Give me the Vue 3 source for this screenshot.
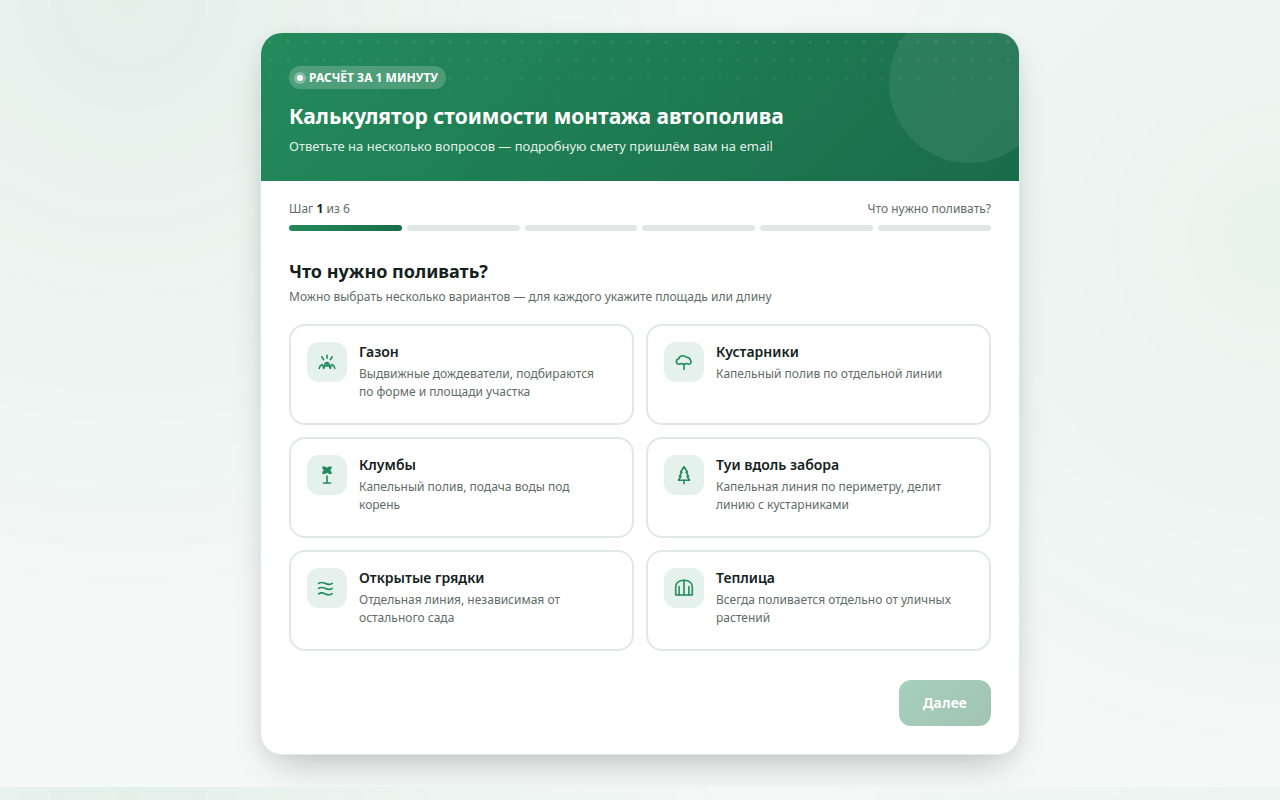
<script setup>
import { ref } from 'vue'

const total = 6
const step = ref(1)
const selected = ref([])

const options = [
  { id: 'lawn', title: 'Газон', text: 'Выдвижные дождеватели, подбираются по форме и площади участка' },
  { id: 'shrubs', title: 'Кустарники', text: 'Капельный полив по отдельной линии' },
  { id: 'flowers', title: 'Клумбы', text: 'Капельный полив, подача воды под корень' },
  { id: 'thuja', title: 'Туи вдоль забора', text: 'Капельная линия по периметру, делит линию с кустарниками' },
  { id: 'beds', title: 'Открытые грядки', text: 'Отдельная линия, независимая от остального сада' },
  { id: 'greenhouse', title: 'Теплица', text: 'Всегда поливается отдельно от уличных растений' }
]

function toggle(id) {
  selected.value = selected.value.includes(id)
    ? selected.value.filter((item) => item !== id)
    : [...selected.value, id]
}
</script>

<template>
  <div class="page">
    <main class="card">
      <header class="hero">
        <span class="chip"><span class="dot"></span>РАСЧЁТ ЗА 1 МИНУТУ</span>
        <h1>Калькулятор стоимости монтажа автополива</h1>
        <p>Ответьте на несколько вопросов — подробную смету пришлём вам на email</p>
      </header>

      <section class="progress">
        <div class="progress-row">
          <span>Шаг <b>{{ step }}</b> из {{ total }}</span>
          <span>Что нужно поливать?</span>
        </div>
        <div class="bars">
          <span v-for="n in total" :key="n" class="bar" :class="{ done: n <= step }"></span>
        </div>
      </section>

      <section class="content">
        <h2>Что нужно поливать?</h2>
        <p class="hint">Можно выбрать несколько вариантов — для каждого укажите площадь или длину</p>

        <div class="grid">
          <button
            v-for="option in options"
            :key="option.id"
            type="button"
            class="option"
            :class="{ active: selected.includes(option.id) }"
            :aria-pressed="selected.includes(option.id)"
            @click="toggle(option.id)"
          >
            <span class="icon">
              <svg viewBox="0 0 20 20" aria-hidden="true">
                <g v-if="option.id === 'lawn'">
                  <path d="M2.2 16.4c.3-2 1.2-3.2 3-3.9 1 .8 1.3 2.2 1.4 3.9M17.8 16.4c-.3-2-1.2-3.2-3-3.9-1 .8-1.3 2.2-1.4 3.9" />
                  <path d="M7.2 15.8c.2-2.8.8-5.2 2.8-5.2s2.6 2.4 2.8 5.2M8.2 14h3.6M10 11v3" />
                  <path d="M10 3.2v3M4.8 4.8l1.8 2.8M15.2 4.8l-1.8 2.8" />
                </g>
                <g v-else-if="option.id === 'shrubs'">
                  <path d="M5.8 12.2c-2 0-3.4-1-3.4-2.7 0-1.5 1-2.4 2.3-2.7.5-2 2.2-3.1 4.2-3.1 1.5 0 2.7.6 3.5 1.6 2.2 0 3.6 1.1 3.9 2.8 1.7 1.9.7 4.1-1.8 4.1-.8-.8-1.8-.9-2.8-.5-1 .5-2.8.5-3.7 0-.8-.4-1.6-.1-2.2.5Z" />
                  <path d="M10 12.4v5" />
                </g>
                <g v-else-if="option.id === 'flowers'">
                  <path class="fill" d="M5.2 1.8c2-.5 3.8.1 4.8 1 1-.9 2.8-1.5 4.8-1 .1 1.5-.6 2.7-1.6 3.4 1 .9 1.7 2.1 1.6 3.9-2 .3-3.6-.2-4.8-1.3-1.2 1.1-2.8 1.6-4.8 1.3-.1-1.8.6-3 1.6-3.9-1-.7-1.7-1.9-1.6-3.4Z" />
                  <path d="M10 11v7M6.5 18h7" />
                </g>
                <g v-else-if="option.id === 'thuja'">
                  <path d="M10 1.8 6.5 7.2H8L5.5 11.2H7L4.4 15.2h11.2L13 11.2h1.5L12 7.2h1.5Z" />
                  <path d="M10 15.2v3.4" />
                </g>
                <g v-else-if="option.id === 'beds'">
                  <path d="M1.6 5.4c3-2 4.8-.8 7 .2 2.3 1.1 4.3 1.2 6.6-.3M1.6 10.4c3-2 4.8-.8 7 .2 2.3 1.1 4.3 1.2 6.6-.3M1.6 15.8c3-2 4.8-.8 7 .2 2.3 1.1 4.3 1.2 6.6-.3" />
                </g>
                <g v-else>
                  <path d="M1.7 17V9c0-4 3-6.8 8.3-6.8S18.3 5 18.3 9v8Z" />
                  <path d="M5.1 17V8.5M10 17V2.2M14.9 17V8.5" />
                </g>
              </svg>
            </span>
            <span class="copy">
              <span class="title">{{ option.title }}</span>
              <span class="text">{{ option.text }}</span>
            </span>
          </button>
        </div>

        <footer class="actions">
          <button type="button" class="next" :disabled="!selected.length">Далее</button>
        </footer>
      </section>
    </main>
  </div>
</template>

<style>
body {
  background:
    radial-gradient(circle at 10% 0%, rgba(34, 148, 91, 0.08), transparent 45%),
    radial-gradient(circle at 100% 30%, rgba(34, 160, 91, 0.06), transparent 40%),
    #f4f8f7;
}
</style>

<style scoped>
.page {
  padding: 32px 16px;
  font-family: "Noto Sans", "Open Sans", sans-serif;
  color: #14211c;
}

.card {
  max-width: 758px;
  margin: 0 auto;
  overflow: hidden;
  background: #fff;
  border: 1px solid #e1e9e6;
  border-radius: 22px;
  box-shadow: 0 20px 40px -16px rgba(15, 40, 30, 0.26), 0 4px 20px rgba(15, 40, 30, 0.06);
}

.hero {
  position: relative;
  overflow: hidden;
  padding: 33px 28px 25px;
  color: #fff;
  background: linear-gradient(135deg, #238b5b, #196c48);
}

.hero::before {
  content: "";
  position: absolute;
  inset: 0;
  background: radial-gradient(circle at 9px 9px, rgba(255, 255, 255, 0.1) 1px, transparent 2px) 0 0 / 18px 18px;
  mask-image: linear-gradient(#000, transparent 65%);
}

.hero::after {
  content: "";
  position: absolute;
  top: -30px;
  right: -30px;
  width: 160px;
  height: 160px;
  border-radius: 50%;
  background: rgba(255, 255, 255, 0.08);
}

.chip {
  position: relative;
  display: inline-flex;
  align-items: center;
  gap: 6px;
  padding: 0 8px;
  border-radius: 12px;
  background: rgba(255, 255, 255, 0.2);
  font-size: 12px;
  line-height: 23px;
  font-weight: 700;
  vertical-align: top;
}

.dot {
  width: 6px;
  height: 6px;
  border-radius: 50%;
  background: #fff;
  box-shadow: 0 0 0 3px rgba(255, 255, 255, 0.3);
}

h1 {
  position: relative;
  margin: 13px 0 6px;
  font-size: 21px;
  line-height: 28px;
  font-weight: 700;
}

.hero p {
  position: relative;
  margin: 0;
  font-size: 13px;
  line-height: 20px;
  color: rgba(255, 255, 255, 0.9);
}

.progress {
  padding: 18px 28px 0;
}

.progress-row {
  display: flex;
  justify-content: space-between;
  margin-bottom: 6px;
  font-size: 12px;
  line-height: 20px;
  color: #5f6c67;
}

.progress-row b {
  color: #14211c;
}

.bars {
  display: flex;
  gap: 5px;
}

.bar {
  flex: 1;
  height: 6px;
  border-radius: 3px;
  background: #dfe8e4;
}

.bar.done {
  background: linear-gradient(135deg, #238b5b, #196c48);
}

.content {
  padding: 28px;
}

h2 {
  margin: 0;
  font-size: 18px;
  line-height: 24px;
  font-weight: 700;
}

.hint {
  margin: 4px 0 17px;
  font-size: 12px;
  line-height: 20px;
  color: #5f6c67;
}

.grid {
  display: grid;
  grid-template-columns: 1fr 1fr;
  grid-auto-rows: minmax(101px, auto);
  gap: 12px;
}

.option {
  display: flex;
  align-items: flex-start;
  gap: 12px;
  padding: 16px;
  border: 2px solid #e0e8e5;
  border-radius: 16px;
  background: #fff;
  color: inherit;
  font: inherit;
  text-align: left;
  cursor: pointer;
}

.option.active {
  border-color: #238b5b;
}

.icon {
  display: flex;
  flex: none;
  align-items: center;
  justify-content: center;
  width: 40px;
  height: 40px;
  border-radius: 12px;
  background: #e4f1ec;
}

.icon svg {
  width: 20px;
  height: 20px;
  fill: none;
  stroke: #238b5b;
  stroke-width: 1.6;
  stroke-linecap: round;
  stroke-linejoin: round;
}

.icon .fill {
  fill: #238b5b;
  stroke: none;
}

.copy {
  display: flex;
  flex-direction: column;
  gap: 3px;
  min-width: 0;
  padding-right: 16px;
}

.title {
  font-size: 14px;
  line-height: 20px;
  font-weight: 600;
}

.text {
  font-size: 12px;
  line-height: 18px;
  color: #5f6c67;
}

.actions {
  display: flex;
  justify-content: flex-end;
  margin-top: 29px;
}

.next {
  padding: 13px 24px;
  border: 0;
  border-radius: 12px;
  background: linear-gradient(135deg, #238b5b, #196c48);
  color: #fff;
  font-family: inherit;
  font-size: 14px;
  line-height: 20px;
  font-weight: 700;
}

.next:disabled {
  opacity: 0.4;
}
</style>
